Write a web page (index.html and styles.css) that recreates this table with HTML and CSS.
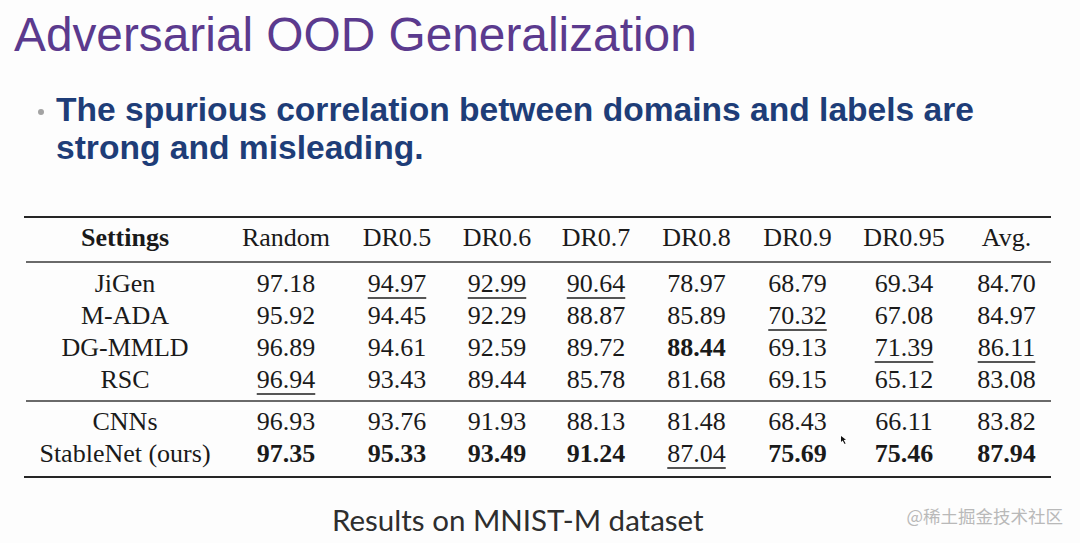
FILE: index.html
```html
<!DOCTYPE html>
<html lang="en">
<head>
<meta charset="utf-8">
<title>Adversarial OOD Generalization</title>
<link rel="stylesheet" href="styles.css">
</head>
<body>
<main class="slide">
  <h1 class="title">Adversarial OOD Generalization</h1>
  <ul class="bullets">
    <li>The spurious correlation between domains and labels are strong and misleading.</li>
  </ul>

  <div class="results">
    <div class="row head">
      <span class="b">Settings</span><span>Random</span><span>DR0.5</span><span>DR0.6</span><span>DR0.7</span><span>DR0.8</span><span>DR0.9</span><span>DR0.95</span><span>Avg.</span>
    </div>
    <div class="group">
      <div class="row"><span>JiGen</span><span>97.18</span><span class="u">94.97</span><span class="u">92.99</span><span class="u">90.64</span><span>78.97</span><span>68.79</span><span>69.34</span><span>84.70</span></div>
      <div class="row"><span>M-ADA</span><span>95.92</span><span>94.45</span><span>92.29</span><span>88.87</span><span>85.89</span><span class="u">70.32</span><span>67.08</span><span>84.97</span></div>
      <div class="row"><span>DG-MMLD</span><span>96.89</span><span>94.61</span><span>92.59</span><span>89.72</span><span class="b">88.44</span><span>69.13</span><span class="u">71.39</span><span class="u">86.11</span></div>
      <div class="row"><span>RSC</span><span class="u">96.94</span><span>93.43</span><span>89.44</span><span>85.78</span><span>81.68</span><span>69.15</span><span>65.12</span><span>83.08</span></div>
    </div>
    <div class="group last">
      <div class="row"><span>CNNs</span><span>96.93</span><span>93.76</span><span>91.93</span><span>88.13</span><span>81.48</span><span>68.43</span><span>66.11</span><span>83.82</span></div>
      <div class="row"><span>StableNet (ours)</span><span class="b">97.35</span><span class="b">95.33</span><span class="b">93.49</span><span class="b">91.24</span><span class="u">87.04</span><span class="b">75.69</span><span class="b">75.46</span><span class="b">87.94</span></div>
    </div>
  </div>

  <p class="caption">Results on MNIST-M dataset</p>

  <svg class="cursor" width="7" height="10" viewBox="0 0 7 10" aria-hidden="true">
    <path d="M1 1 L1 7 L2.6 5.6 L4.6 9 L5.6 8.4 L3.7 5.1 L6 4.8 Z" fill="#111"/>
  </svg>
  <span class="watermark">@稀土掘金技术社区</span>
</main>
</body>
</html>
```

FILE: styles.css
```css
html, body {
  margin: 0;
  padding: 0;
  background: #fdfdfd;
}

.slide {
  position: relative;
  width: 1080px;
  height: 543px;
  box-sizing: border-box;
  padding: 11px 0 0 0;
  overflow: hidden;
}

.title {
  margin: 0 0 0 14px;
  font-family: "Liberation Sans", Arial, sans-serif;
  font-weight: 400;
  font-size: 47.8px;
  line-height: 48px;
  color: #5b3a8e;
  white-space: nowrap;
}

.bullets {
  list-style: none;
  margin: 32px 0 0 38px;
  padding: 0;
  width: 1000px;
}

.bullets li {
  display: flex;
  align-items: flex-start;
  font-family: "Liberation Sans", Arial, sans-serif;
  font-weight: 700;
  font-size: 33.6px;
  line-height: 38px;
  color: #1e3d78;
}

.bullets li::before {
  content: "";
  flex: none;
  width: 6px;
  height: 6px;
  margin: 18px 12px 0 0;
  border-radius: 50%;
  background: #a3a3a3;
}

.results {
  margin: 49px 0 0 24px;
  width: 1027px;
  box-sizing: border-box;
  padding-left: 2px;
  border-top: 2px solid #262626;
  border-bottom: 2px solid #262626;
  font-family: "Liberation Serif", "Times New Roman", serif;
  font-size: 26px;
  color: #1a1a1a;
}

.row {
  display: grid;
  grid-template-columns: 198px 124px 98px 102px 96px 105px 97px 116px 89px;
  line-height: 32px;
  white-space: nowrap;
}

.row span {
  text-align: center;
}

.row.head {
  line-height: 40px;
  padding-bottom: 3px;
  border-bottom: 2px solid #6a6a6a;
}

.group {
  padding: 5px 0 4px;
  border-bottom: 2px solid #6a6a6a;
}

.group.last {
  padding: 4px 0 6px;
  border-bottom: none;
}

.b {
  font-weight: 700;
}

.u {
  text-decoration: underline;
  text-decoration-thickness: 1.5px;
  text-underline-offset: 5px;
  text-decoration-color: #555;
}

.caption {
  margin: 27px 0 0 332px;
  font-family: Lato, "Open Sans", sans-serif;
  font-weight: 400;
  font-size: 29.5px;
  line-height: 29px;
  color: #2e2e2e;
  white-space: nowrap;
}

.cursor {
  position: absolute;
  left: 840px;
  top: 435px;
}

.watermark {
  position: absolute;
  right: 17px;
  top: 505px;
  font-family: "Noto Sans CJK SC", sans-serif;
  font-size: 17.5px;
  line-height: 22px;
  color: #b9b9b9;
  white-space: nowrap;
}
```
